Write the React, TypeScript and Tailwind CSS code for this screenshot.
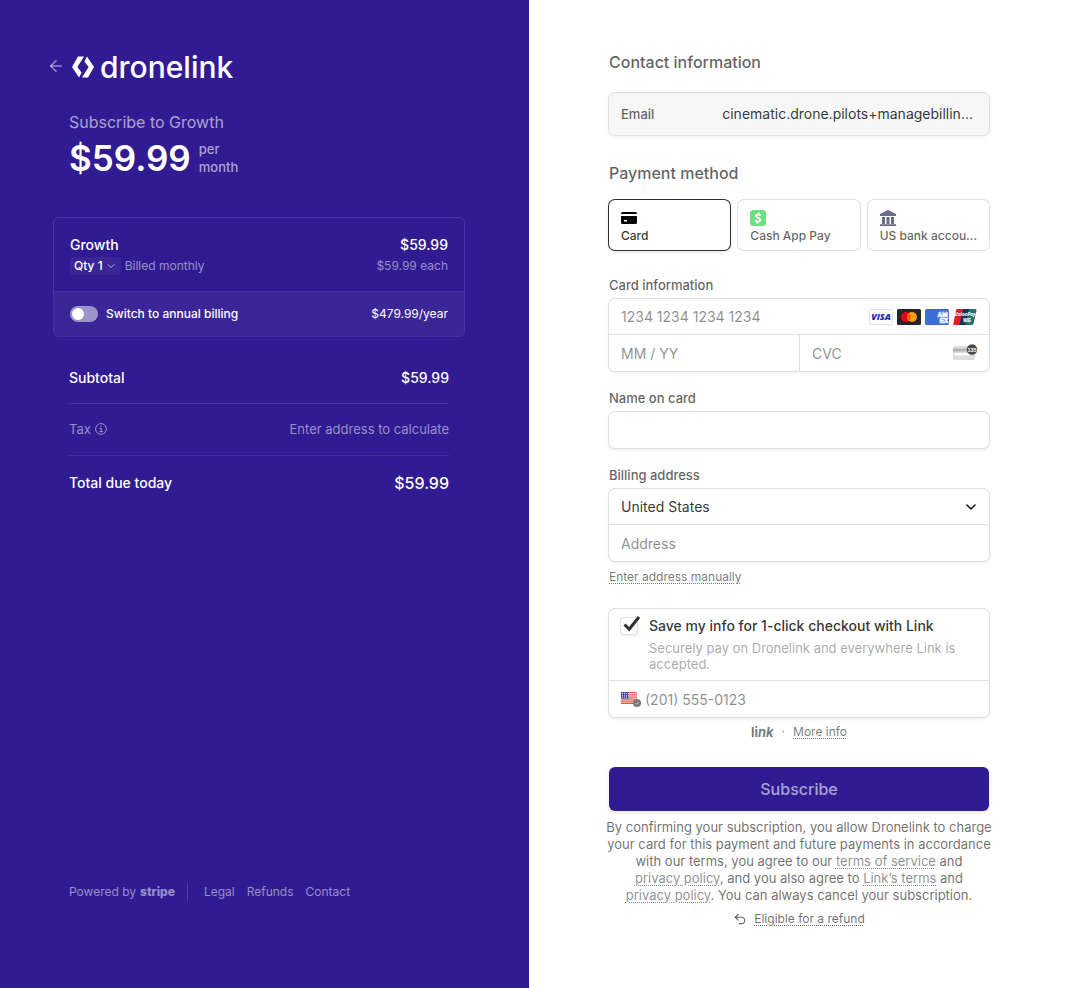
import type { InputHTMLAttributes, ReactNode } from "react";
import { ArrowLeft, ChevronDown, Undo2 } from "lucide-react";

const box =
  "rounded-md bg-white shadow-[0_0_0_1px_#e0e0e0,0_2px_4px_0_rgba(0,0,0,0.07),0_1px_2px_0_rgba(0,0,0,0.05)]";
const label = "text-[13px] leading-4 font-medium text-[#1a1a1a]/70";
const dotted = "underline decoration-dotted decoration-1 underline-offset-2";
const input =
  "h-9 w-full min-w-0 bg-transparent px-3 text-sm text-[#1a1a1a]/90 outline-none placeholder:text-[#1a1a1a]/50";

function Field(props: InputHTMLAttributes<HTMLInputElement>) {
  return <input {...props} className={input} />;
}

function DronelinkLogo() {
  return (
    <div className="flex items-center gap-1.5 pt-0.5 text-white">
      <svg viewBox="0 0 22 22" className="size-[22px]" aria-hidden="true">
        <path d="M6 .5H12L5.400 11l4.200 5.600L7 21.500 0 11z" fill="currentColor" />
        <path d="M16 21.500H10L16.600 11l-4.200-5.600L15 .5 22 11z" fill="currentColor" />
      </svg>
      <span className="text-[30px] leading-7 font-medium">dronelink</span>
    </div>
  );
}

function Visa() {
  return (
    <svg viewBox="0 0 24 16" className="h-4 w-6" role="img" aria-label="Visa">
      <rect x=".5" y=".5" width="23" height="15" rx="1" fill="#fff" stroke="#dfe1ea" />
      <text x="12" y="11.400" textAnchor="middle" fontFamily="Open Sans, sans-serif" fontSize="9" fontWeight="800" fontStyle="italic" fill="#1d2bb8">
        VISA
      </text>
    </svg>
  );
}

function Mastercard() {
  return (
    <svg viewBox="0 0 24 16" className="h-4 w-6" role="img" aria-label="Mastercard">
      <rect width="24" height="16" rx="1.500" fill="#252525" />
      <circle cx="9" cy="8" r="5" fill="#eb001b" />
      <circle cx="15" cy="8" r="5" fill="#f79e1b" />
      <path d="M12 4a5 5 0 0 1 0 8 5 5 0 0 1 0-8" fill="#ff5f00" />
    </svg>
  );
}

function Amex() {
  return (
    <svg viewBox="0 0 24 16" className="h-4 w-6" role="img" aria-label="American Express">
      <rect width="24" height="16" rx="1.500" fill="#3c6fd6" />
      <g fontFamily="Liberation Sans, sans-serif" fontSize="6.500" fontWeight="700" fill="#3c6fd6" stroke="#fff" strokeWidth=".7">
        <text x="12.500" y="7.800">AM</text>
        <text x="14.500" y="13.800">EX</text>
      </g>
    </svg>
  );
}

function UnionPay() {
  return (
    <svg viewBox="0 0 24 16" className="h-4 w-6" role="img" aria-label="UnionPay">
      <path d="M4.500 0H11L7.500 16H1.500Q0 16 .4 14.400L3 1.200Q3.300 0 4.500 0z" fill="#df1f27" />
      <path d="M10 0h7l-3.500 16h-7z" fill="#12315f" />
      <path d="M16 0h6.300q1.500 0 1.200 1.400l-3 13.200Q20.200 16 19 16h-6.500z" fill="#20756a" />
      <text x="12" y="7" textAnchor="middle" fontFamily="Open Sans, sans-serif" fontSize="4.700" fontWeight="700" fontStyle="italic" fill="#fff">
        UnionPay
      </text>
      <text x="14" y="13.200" textAnchor="middle" fontFamily="Noto Sans CJK SC, sans-serif" fontSize="4" fontWeight="700" fill="#fff">
        银联
      </text>
    </svg>
  );
}

function CvcIcon() {
  return (
    <svg viewBox="0 0 26 18" className="h-[18px] w-[26px] shrink-0" aria-hidden="true">
      <rect x="1" y="2" width="22" height="14" rx="2" fill="#dcdcdc" />
      <path d="M1 4.500h22v3H1z" fill="#b4b4b4" />
      <rect x="2.500" y="9" width="15" height="2.500" rx=".5" fill="#fff" />
      <circle cx="20" cy="5.500" r="5.300" fill="#4b4b4b" />
      <text x="20" y="7.600" textAnchor="middle" fontFamily="Liberation Sans, sans-serif" fontSize="5.500" fontWeight="700" fill="#fff">
        135
      </text>
    </svg>
  );
}

function CardIcon() {
  return (
    <svg viewBox="0 0 16 16" className="size-4" aria-hidden="true">
      <path d="M0 3.500Q0 2 1.500 2h13Q16 2 16 3.500V4H0zM0 6h16v6.500Q16 14 14.500 14h-13Q0 14 0 12.500zm3 4v1.500h3V10z" fill="#000" fillRule="evenodd" />
    </svg>
  );
}

function CashIcon() {
  return (
    <svg viewBox="0 0 16 16" className="size-4" aria-hidden="true">
      <rect width="16" height="16" rx="3.500" fill="#6be080" />
      <path d="M10.800 5.700C9.400 4.300 6 4 6 6c0 2.300 4.400 1.300 4.300 3.700C10.200 12 6.500 11.800 5.100 10.300M9.100 2.600l-.5 1.900M7.400 11.400l-.5 2" fill="none" stroke="#fff" strokeWidth="1.900" />
    </svg>
  );
}

function BankIcon() {
  return (
    <svg viewBox="0 0 16 16" className="size-4" aria-hidden="true">
      <path d="M8 0l8 4v2H0V4zM2 7h3v7H2zM6.500 7h3v7h-3zM11 7h3v7h-3zM0 14.200h16V16H0z" fill="#6a6c87" />
    </svg>
  );
}

function Flag() {
  return (
    <svg viewBox="0 0 20 16" className="h-4 w-5 shrink-0" aria-hidden="true">
      <path d="M0 1h16v12H0z" fill="#fff" />
      <path d="M0 1h16v1.300H0zM0 3.300h16v1.200H0zM0 5.500h16v1.200H0zM0 7.500h16v1.200H0zM0 9.500h16v1.200H0zM0 11.600h16V13H0z" fill="#ee5148" />
      <path d="M0 1h8v6.500H0z" fill="#4a4a9c" />
      <path d="M1 2.500h7M1 4.300h7M1 6h7" stroke="#fff" strokeWidth=".8" strokeDasharray="1 1" />
      <circle cx="16" cy="12" r="4" fill="#7a7a7a" />
      <path d="M14.300 12l1.300 1.300 2.200-2.500" stroke="#c9c9c9" strokeWidth="1" fill="none" />
    </svg>
  );
}

function Method({ icon, name, selected }: { icon: ReactNode; name: string; selected?: boolean }) {
  return (
    <button
      type="button"
      aria-pressed={!!selected}
      className={
        selected
          ? "flex h-[50px] min-w-0 flex-col rounded-md bg-white pt-2.5 pr-1.5 pl-3 text-left text-[#1a1a1a]/90 shadow-[0_0_0_1px_#303030,0_2px_4px_0_rgba(0,0,0,0.12)]"
          : "flex h-[50px] min-w-0 flex-col rounded-md bg-white pt-2.5 pr-1.5 pl-3 text-left text-[#1a1a1a]/70 shadow-[0_0_0_1px_#e0e0e0]"
      }
    >
      {icon}
      <span className="mt-0.5 w-full truncate text-xs leading-4 font-medium">{name}</span>
    </button>
  );
}

function Summary() {
  return (
    <section className="flex justify-end bg-[#311b92] pr-16 pl-12 text-white">
      <div className="flex w-full max-w-[412px] flex-col pt-[52px] pb-[87px]">
        <header className="-ml-1.5 flex h-7 items-center gap-[7px]">
          <a href="#back" aria-label="Back" className="text-white/50">
            <ArrowLeft className="size-[18px]" strokeWidth={2} />
          </a>
          <DronelinkLogo />
        </header>

        <div className="mt-8 px-4">
          <h1 className="text-base leading-5 text-white/60">Subscribe to Growth</h1>
          <div className="mt-1.5 flex items-center gap-2">
            <span className="text-[35px] leading-10 font-semibold">$59.99</span>
            <span className="text-[13px] leading-[18px] font-medium text-white/60">
              per
              <br />
              month
            </span>
          </div>
        </div>

        <div className="mt-[39px] overflow-hidden rounded-md border border-white/10 bg-clip-padding">
          <div className="flex h-[73px] justify-between px-4 pt-[18px]">
            <div>
              <div className="text-sm leading-[18px] font-medium">Growth</div>
              <div className="mt-[3px] flex items-center gap-1 text-xs leading-[18px]">
                <button type="button" className="flex items-center gap-0.5 rounded bg-white/5 px-1 font-medium">
                  Qty 1
                  <ChevronDown className="size-3 text-white/60" />
                </button>
                <span className="text-white/50">Billed monthly</span>
              </div>
            </div>
            <div className="text-right">
              <div className="text-sm leading-[18px] font-medium">$59.99</div>
              <div className="mt-[3px] text-xs leading-[18px] text-white/50">$59.99 each</div>
            </div>
          </div>
          <div className="flex h-[45px] items-center border-t border-white/10 bg-white/5 bg-clip-padding px-4 text-xs">
            <label className="flex items-center gap-2 font-medium">
              <input
                type="checkbox"
                role="switch"
                className="h-4 w-7 appearance-none rounded-full bg-white/50 p-0.5 before:block before:size-3 before:rounded-full before:bg-white"
              />
              Switch to annual billing
            </label>
            <span className="ml-auto">$479.99/year</span>
          </div>
        </div>

        <dl className="mx-4 mt-[31px] text-sm leading-5">
          <div className="flex justify-between border-b border-white/10 pb-[15px]">
            <dt className="font-medium">Subtotal</dt>
            <dd className="font-medium">$59.99</dd>
          </div>
          <div className="flex justify-between border-b border-white/10 pt-[15px] pb-4 text-[13px] text-white/50">
            <dt className="flex items-center gap-1">
              Tax
              <svg viewBox="0 0 12 12" className="size-3" fill="none" stroke="currentColor" aria-hidden="true">
                <circle cx="6" cy="6" r="5.400" />
                <path d="M4.500 5.300h1.700v3.200M4.300 8.700h3.700M5.400 3.300h1.200" />
              </svg>
            </dt>
            <dd>Enter address to calculate</dd>
          </div>
          <div className="flex items-center justify-between pt-[17px]">
            <dt className="font-medium">Total due today</dt>
            <dd className="text-base leading-5 font-medium">$59.99</dd>
          </div>
        </dl>

        <footer className="mt-auto flex items-center px-4 text-xs leading-4 text-white/50">
          <a href="#stripe" className="flex items-center gap-1">
            Powered by
            <span className="font-extrabold">stripe</span>
          </a>
          <span className="mr-4 ml-3 h-[18px] w-px bg-white/15" />
          <nav className="flex gap-3">
            <a href="#legal">Legal</a>
            <a href="#refunds">Refunds</a>
            <a href="#contact">Contact</a>
          </nav>
        </footer>
      </div>
    </section>
  );
}

function Payment() {
  return (
    <section className="bg-white pr-12 pl-20">
      <form className="flex w-full max-w-[380px] flex-col pt-[52px] pb-14">
        <h2 className="text-base leading-5 font-medium text-[#1a1a1a]/70">Contact information</h2>
        <div className="mt-[21px] flex h-[42px] items-center rounded-md bg-[#f7f7f7] px-3 shadow-[0_0_0_1px_#e0e0e0,0_2px_4px_0_rgba(0,0,0,0.07)]">
          <label htmlFor="email" className={label}>
            Email
          </label>
          <input
            id="email"
            readOnly
            value="cinematic.drone.pilots+managebillin..."
            className="min-w-0 flex-1 bg-transparent pr-1 text-right text-sm text-[#1a1a1a]/90 outline-none"
          />
        </div>

        <h2 className="mt-7 text-base leading-5 font-medium text-[#1a1a1a]/70">Payment method</h2>
        <div className="mt-[17px] grid grid-cols-3 gap-2">
          <Method icon={<CardIcon />} name="Card" selected />
          <Method icon={<CashIcon />} name="Cash App Pay" />
          <Method icon={<BankIcon />} name="US bank accou..." />
        </div>

        <label htmlFor="number" className={`mt-[27px] ${label}`}>
          Card information
        </label>
        <div className={`mt-1.5 ${box}`}>
          <div className="flex h-9 items-center border-b border-[#e0e0e0] pr-3">
            <Field id="number" placeholder="1234 1234 1234 1234" />
            <div className="flex shrink-0 gap-1">
              <Visa />
              <Mastercard />
              <Amex />
              <UnionPay />
            </div>
          </div>
          <div className="grid grid-cols-2">
            <Field aria-label="Expiration" placeholder="MM / YY" />
            <div className="flex items-center border-l border-[#e0e0e0] pr-[11px]">
              <Field aria-label="CVC" placeholder="CVC" />
              <CvcIcon />
            </div>
          </div>
        </div>

        <label htmlFor="name" className={`mt-[19px] ${label}`}>
          Name on card
        </label>
        <div className={`mt-1.5 ${box}`}>
          <Field id="name" />
        </div>

        <label htmlFor="country" className={`mt-[19px] ${label}`}>
          Billing address
        </label>
        <div className={`mt-1.5 ${box}`}>
          <div className="relative h-9 border-b border-[#e0e0e0]">
            <select id="country" className={`appearance-none ${input}`}>
              <option>United States</option>
            </select>
            <ChevronDown className="pointer-events-none absolute top-2.5 right-2.5 size-4 text-[#1a1a1a]" strokeWidth={2.4} />
          </div>
          <Field aria-label="Address" placeholder="Address" />
        </div>
        <button type="button" className={`mt-2 self-start text-xs leading-4 text-[#1a1a1a]/60 ${dotted}`}>
          Enter address manually
        </button>

        <div className={`mt-6 ${box}`}>
          <div className="flex gap-3 border-b border-[#e0e0e0] px-3 pt-2 pb-2">
            <span className="relative h-[18px] w-4 shrink-0">
              <input
                id="save"
                type="checkbox"
                defaultChecked
                className="-ml-px block size-[18px] appearance-none rounded bg-white shadow-[inset_0_0_0_1px_#e0e0e0,0_1px_2px_rgba(0,0,0,0.08)]"
              />
              <svg viewBox="0 0 18 16" className="pointer-events-none absolute -top-px left-0.5 h-4 w-[18px]" aria-hidden="true">
                <path d="M1.500 8.500l4.700 4.700L16 1" fill="none" stroke="#303030" strokeWidth="3" />
              </svg>
            </span>
            <div className="text-[13px] leading-4 text-[#1a1a1a]/40">
              <label htmlFor="save" className="block text-sm leading-[18px] font-medium text-[#1a1a1a]/90">
                Save my info for 1-click checkout with Link
              </label>
              <p className="mt-[5px]">Securely pay on Dronelink and everywhere Link is accepted.</p>
            </div>
          </div>
          <div className="flex items-center pl-3">
            <Flag />
            <input
              aria-label="Phone number"
              placeholder="(201) 555-0123"
              className="h-9 w-full min-w-0 bg-transparent px-1 text-sm outline-none placeholder:text-[#1a1a1a]/50"
            />
          </div>
        </div>
        <div className="mt-[7px] flex items-center justify-center gap-2 text-xs leading-4 text-[#1a1a1a]/60">
          <span className="text-[13px] leading-4 font-bold">
            li<i>nk</i>
          </span>
          <span>·</span>
          <a href="#more" className={dotted}>
            More info
          </a>
        </div>

        <button
          type="submit"
          className="mt-[27px] h-11 rounded-md bg-[#311b92] text-base font-medium text-white/60 shadow-[0_2px_4px_rgba(0,0,0,0.1)]"
        >
          Subscribe
        </button>
        <p className="-mx-1 mt-2 text-center text-[13px] leading-[17px] text-[#1a1a1a]/65">
          By confirming your subscription, you allow Dronelink to charge
          <br />
          your card for this payment and future payments in accordance
          <br />
          with our terms, you agree to our{" "}
          <a href="#terms" className={`text-[#1a1a1a]/50 ${dotted}`}>
            terms of service
          </a>{" "}
          and
          <br />
          <a href="#privacy" className={`text-[#1a1a1a]/50 ${dotted}`}>
            privacy policy
          </a>
          , and you also agree to{" "}
          <a href="#link-terms" className={`text-[#1a1a1a]/50 ${dotted}`}>
            Link’s terms
          </a>{" "}
          and
          <br />
          <a href="#link-privacy" className={`text-[#1a1a1a]/50 ${dotted}`}>
            privacy policy
          </a>
          . You can always cancel your subscription.
        </p>
        <a href="#refund" className="mt-[7px] flex items-center justify-center gap-[7px] text-xs leading-4 text-[#1a1a1a]/65">
          <Undo2 className="size-3.5" />
          <span className={dotted}>Eligible for a refund</span>
        </a>
      </form>
    </section>
  );
}

export default function App() {
  return (
    <main className="grid min-h-screen grid-cols-[529fr_563fr] bg-white font-['Inter','Liberation_Sans',sans-serif]">
      <Summary />
      <Payment />
    </main>
  );
}
